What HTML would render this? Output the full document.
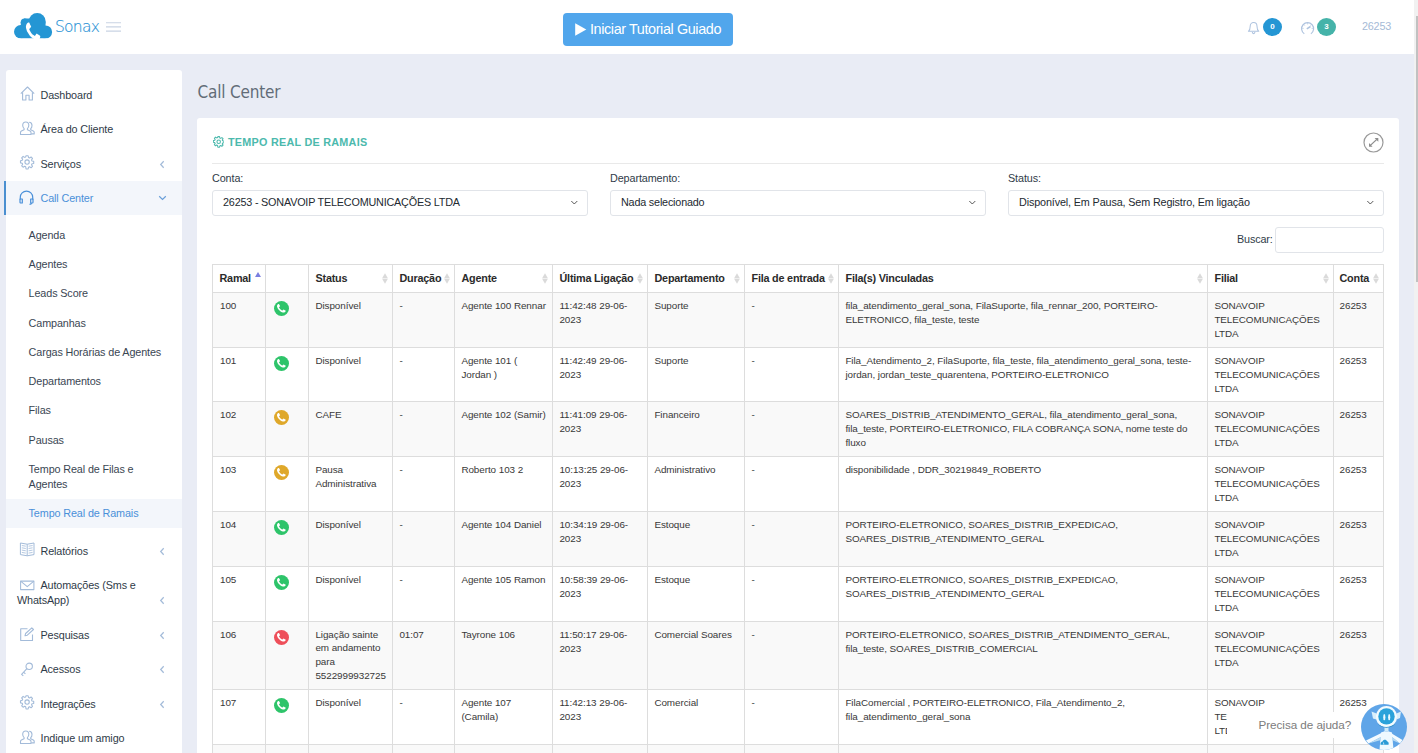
<!DOCTYPE html>
<html lang="pt-br">
<head>
<meta charset="utf-8">
<title>Sonax - Call Center</title>
<style>
*{box-sizing:border-box;margin:0;padding:0}
html,body{width:1418px;height:753px;overflow:hidden}
body{background:#e9ecf5;font-family:"Liberation Sans",Arial,sans-serif;font-size:12px;color:#4d5660;position:relative}
.abs{position:absolute}
/* header */
#hdr{position:absolute;left:0;top:0;width:1414px;height:54px;background:#fff}
#logo-txt{position:absolute;left:55px;top:14px;font-size:15.5px;color:#2b93d6;-webkit-text-stroke:.15px #2b93d6;letter-spacing:-.75px;line-height:26px;font-weight:200;font-family:"DejaVu Sans Light","DejaVu Sans","Liberation Sans",sans-serif}
#burger{position:absolute;left:106px;top:21.800px;width:15px;height:10px}
#burger i{display:block;height:1.400px;background:#ccd6e6;margin-bottom:2.850px}
#tut{position:absolute;left:563px;top:13px;width:170px;height:33px;background:#51a6ec;border-radius:4px;color:#fff;font-size:14.4px;line-height:32.300px;text-align:left;padding-left:27px;letter-spacing:-.39px;white-space:nowrap}
.badge{position:absolute;width:19px;height:18px;border-radius:50%;color:#fff;font-size:8px;font-weight:bold;text-align:center;line-height:18px}
#acct{position:absolute;left:1362px;top:19px;font-size:10.8px;color:#a5bad6;line-height:14px;letter-spacing:-.2px}
/* scrollbar */
#sbt{position:absolute;left:1414px;top:0;width:4px;height:753px;background:#f1f1f1}
#sbh{position:absolute;left:1416px;top:16px;width:2px;height:266px;background:#c1c1c1}
/* sidebar */
#side{position:absolute;left:6px;top:70px;width:176px;height:700px;background:#fff;border-radius:3px 3px 0 0}
.mi{position:absolute;left:34.500px;font-size:10.8px;color:#2f3b48;line-height:15px;white-space:nowrap;letter-spacing:-.12px}
.sm{position:absolute;left:22.600px;font-size:10.8px;color:#3a4653;line-height:15px;white-space:nowrap;letter-spacing:-.12px}
.ic{position:absolute;left:13px;width:16px;height:16px}
.ic svg{display:block;overflow:visible}
.arr{position:absolute;left:153px;width:6px;height:8px}
.arr svg{display:block}
#act{position:absolute;left:-2px;top:111px;width:178px;height:34px;background:#f3f6fb;border-left:2px solid #4a8fd0}
#act2{position:absolute;left:0;top:429px;width:176px;height:29px;background:#f3f6fb}
/* main */
#ttl{position:absolute;left:197.500px;top:79px;font-size:17px;line-height:26px;color:#626c78;font-family:"DejaVu Sans Condensed","Liberation Sans",sans-serif;font-weight:400;letter-spacing:-.18px}
#panel{position:absolute;left:197px;top:118px;width:1202px;height:700px;background:#fff;border-radius:3px 3px 0 0}
#ph{position:absolute;left:31px;top:18px;font-size:10.8px;font-weight:bold;color:#4cb9ad;letter-spacing:.26px;line-height:14px;white-space:nowrap}
#hr{position:absolute;left:15px;top:46px;width:1172px;height:1px;background:#e9e9e9}
.lbl{position:absolute;top:54px;letter-spacing:-.1px;font-size:10.8px;color:#2f3b48;line-height:14px}
.sel{position:absolute;top:73px;width:376px;height:26px;border:1px solid #e1e4e9;border-radius:3px;font-size:10.8px;color:#232a31;line-height:23px;padding-left:10px;white-space:nowrap;background:#fff;letter-spacing:-.19px}
.sel svg{position:absolute;right:9px;top:9px}
#srch{position:absolute;left:1078px;top:110px;width:109px;height:26px;border:1px solid #e1e4e9;border-radius:3px}
#bus{position:absolute;left:1040px;top:115px;font-size:10.8px;color:#2f3b48;line-height:14px;letter-spacing:-.15px}
/* table */
#tbl{position:absolute;left:15px;top:147px;width:1171px;border-collapse:collapse;table-layout:fixed;font-size:9.9px;color:#383838}
#tbl th,#tbl td{border:1px solid #ddd;vertical-align:top;text-align:left}
#tbl th{font-size:10.8px;font-weight:bold;color:#2b2b2b;height:28px;padding:6px 0 0 6.5px;line-height:14px;position:relative;white-space:nowrap;background:#fff;letter-spacing:-.2px}
#tbl td{padding:5.65px 4px 0 6.400px;line-height:14px;letter-spacing:-.07px}
#tbl td:last-child{padding-left:5.600px}
#tbl td:first-child{padding-left:7px}
#tbl th:last-child{padding-left:5.5px}
#tbl tr.o td{background:#f9f9f9}
#tbl tr.e td{background:#fff}
.so{position:absolute;right:4.300px;top:8px;width:6px;height:11px}
.ph{display:block;width:15px;height:15px;border-radius:50%;margin:2.2px 0 0 1.700px;position:relative}
.ph svg{position:absolute;left:3px;top:3.2px}
/* help */
#help{position:absolute;left:1226.500px;top:712px;width:150px;height:26px;background:#fff;border-radius:3px;font-size:11.7px;color:#7c7c7c;line-height:26px;padding-left:32px;white-space:nowrap;letter-spacing:-.05px}
#bot{position:absolute;left:1361px;top:704px;width:46px;height:46px;border-radius:50%;background:#5fa5e8;overflow:hidden}
</style>
</head>
<body>
<div id="hdr">
  <svg class="abs" style="left:14px;top:13px" width="39" height="27" viewBox="0 0 39 27"><g fill="#2496d4"><circle cx="6.800" cy="18.800" r="6.800"/><circle cx="10.600" cy="9.300" r="3.900"/><circle cx="23.200" cy="8.500" r="8.500"/><circle cx="31.500" cy="19" r="6.600"/><rect x="6.800" y="9" width="24.700" height="16.600"/><rect x="10" y="5.500" width="10" height="6"/></g><rect x="0" y="25.600" width="39" height="2" fill="#fff"/><g transform="translate(11.900 9.500) scale(.0102 .0124)"><path fill="#fff" d="M1408 1112q0 27-10 70.500t-21 68.500q-21 50-122 106-94 51-186 51-27 0-53-3.500t-57.500-12.500-47-14.500-55.500-20.500-49-18q-98-35-175-83-127-79-264-216t-216-264q-48-77-83-175-3-9-18-49t-20.500-55.500-14.500-47-12.500-57.500-3.500-53q0-92 51-186 56-101 106-122 25-11 68.500-21t70.500-10q14 0 21 3 18 6 53 76 11 19 30 54t35 63.500 31 53.500q3 4 17.500 25t21.500 35.500 7 28.500q0 20-28.500 50t-62 55-62 53-28.500 46q0 9 5 22.500t8.500 20.500 14 24 11.500 19q76 137 174 235t235 174q2 1 19 11.500t24 14 20.500 8.500 22.500 5q18 0 46-28.500t53-62 55-62 50-28.500q14 0 28.500 7t35.500 21.500 25 17.500q25 15 53.500 31t63.500 35 54 30q70 35 76 53 3 7 3 21z"/></g><rect x="0" y="25.600" width="39" height="2" fill="#fff"/></svg>
  <div id="logo-txt">Sonax</div>
  <svg class="abs" style="left:106px;top:21px" width="15" height="12" viewBox="0 0 15 12"><path d="M0 1.150h15v1.150H0zM0 5.350h15v1.150H0zM0 9.550h15v1.150H0z" fill="#c9d3e4"/></svg>
  <div id="tut"><svg class="abs" style="left:12.300px;top:9.500px" width="11.500" height="13" viewBox="0 0 11.500 13"><path d="M.2.300L11.300 6.500.2 12.700z" fill="#fff"/></svg>Iniciar Tutorial Guiado</div>
  <!-- bell -->
  <svg class="abs" style="left:1247px;top:21px" width="13" height="14" viewBox="0 0 13 14" fill="none" stroke="#aec3df" stroke-width="1.050" stroke-linejoin="round">
    <path d="M1.400 10.300C2.700 9.300 3.200 7.800 3.200 5.200 3.200 3 4.700 1.500 6.600 1.500S10 3 10 5.200c0 2.600.5 4.100 1.800 5.100z"/>
    <path d="M5.300 11c0 .9.600 1.600 1.300 1.600s1.300-.7 1.300-1.600"/>
  </svg>
  <div class="badge" style="left:1263px;top:18px;background:#2496d4">0</div>
  <!-- gauge -->
  <svg class="abs" style="left:1300px;top:21.400px" width="15" height="14" viewBox="0 0 15 14" fill="none" stroke="#aec3df" stroke-width="1.200">
    <path d="M4.300 12.700A6 6 0 1 1 10.900 12.700"/>
    <path d="M6.800 7.800l3.700-2.300" stroke-width="1.500"/>
    <path d="M7.600 2.200v1.200M3.900 3.700l.8.800M11.300 3.700l-.8.800M2.400 7.400h1.200M12.800 7.400h-1.200" stroke-width=".8"/>
  </svg>
  <div class="badge" style="left:1317px;top:18px;background:#45b3a9">3</div>
  <div id="acct">26253</div>
</div>
<div id="sbt"></div><div id="sbh"></div>

<div id="side">
  <div id="act"></div>
  <div id="act2"></div>
<div class="ic" style="top:16.5px"><svg width="15" height="15" style="margin:-.5px 0 0 .7px" viewBox="0 0 15 15" fill="none" stroke="#a3bbd9" stroke-width="1.1" stroke-linejoin="round"><path d="M.8 7.600L7.500 1l6.700 6.600"/><path d="M2.600 6.200V14h3.300V9.300h3.200V14h3.300V6.200"/></svg></div><div class="mi" style="top:17.5px">Dashboard</div>
<div class="ic" style="top:50.5px"><svg width="15" height="15" style="margin:.9px 0 0 .7px" viewBox="0 0 15 15" fill="none" stroke="#a3bbd9" stroke-width="1.100" stroke-linejoin="round"><path d="M5.800 1C3.900 1 2.700 2.400 2.700 4.300c0 1.500.6 2.700 1.400 3.400v1.100L1.400 10C.8 10.300.5 10.800.5 11.400V13.500h10.500v-2.100c0-.6-.3-1.100-.9-1.400L7.400 8.800V7.700c.8-.7 1.400-1.900 1.400-3.400C8.800 2.400 7.600 1 5.800 1z"/><path d="M9.200 1.300c1.700.1 2.800 1.400 2.800 3.200 0 1.400-.5 2.500-1.300 3.200v1l2.600 1.200c.6.300.9.800.9 1.400v1.600h-3"/></svg></div><div class="mi" style="top:51.5px">Área do Cliente</div>
<div class="ic" style="top:85.5px"><svg width="14.200" height="14.200" style="margin:-.5px 0 0 .8px" viewBox="0 0 15 15" fill="none" stroke="#a3bbd9" stroke-width="1.150" stroke-linejoin="round"><circle cx="7.500" cy="7.500" r="2.300"/><path d="M6.400.8h2.200l.4 1.800 1.100.5 1.600-1 1.500 1.500-1 1.600.5 1.100 1.800.4v2.200l-1.800.4-.5 1.100 1 1.600-1.500 1.500-1.600-1-1.100.5-.4 1.800H6.400L6 12.400l-1.100-.5-1.600 1-1.500-1.500 1-1.600-.5-1.100L.5 8.300V6.100l1.800-.4.500-1.100-1-1.600 1.500-1.500 1.600 1L6 2z"/></svg></div><div class="mi" style="top:86.5px">Serviços</div><div class="arr" style="top:89.5px"><svg width="6" height="9" viewBox="0 0 6 9" fill="none" stroke="#a3bbd9" stroke-width="1.250"><path d="M4.700 1.300L1.700 4.500 4.700 7.700"/></svg></div>
<div class="ic" style="top:119.5px"><svg width="15" height="15" viewBox="0 0 15 15" fill="none" stroke="#4a90d9" stroke-width="1.200" stroke-linejoin="round"><path d="M1.300 9.500V7.200C1.300 3.800 4.100 1.100 7.500 1.100s6.200 2.700 6.200 6.100v2.300"/><path d="M1 9h2.300v4H1.800c-.5 0-.8-.4-.8-.8z"/><path d="M14 9h-2.300v4h1.500c.5 0 .8-.4.800-.8z"/><path d="M12.500 13c0 .9-.8 1.400-2 1.400"/></svg></div><div class="mi" style="top:120.5px;color:#4a90d9">Call Center</div><div class="arr" style="top:125px;left:152px"><svg width="9" height="6" viewBox="0 0 9 6" fill="none" stroke="#6a9fd9" stroke-width="1.200"><path d="M1.200 1.300L4.500 4.500 7.800 1.300"/></svg></div>
<div class="sm" style="top:157.5px">Agenda</div>
<div class="sm" style="top:186.5px">Agentes</div>
<div class="sm" style="top:215.5px">Leads Score</div>
<div class="sm" style="top:245.5px">Campanhas</div>
<div class="sm" style="top:274.5px">Cargas Horárias de Agentes</div>
<div class="sm" style="top:303.5px">Departamentos</div>
<div class="sm" style="top:332.5px">Filas</div>
<div class="sm" style="top:362.5px">Pausas</div>
<div class="sm" style="top:391.5px">Tempo Real de Filas e<br>Agentes</div>
<div class="sm" style="top:435.5px;color:#4a90d9">Tempo Real de Ramais</div>
<div class="ic" style="top:472.5px"><svg width="16" height="15" style="margin-top:-.6px" viewBox="0 0 16 15" fill="none" stroke="#a3bbd9" stroke-width="1" stroke-linejoin="round"><path d="M1.400 1L8.200 2.200V13.800L1.400 12.600zM15 1L8.200 2.200M15 1V12.600L8.200 13.800"/><path stroke-width=".8" d="M2.800 3.500l4 .7M2.800 5.800l4 .7M2.800 8.100l4 .7M2.800 10.400l4 .7M13.600 3.500l-4 .7M13.600 5.800l-4 .7M13.600 8.100l-4 .7M13.600 10.400l-4 .7"/></svg></div><div class="mi" style="top:473.5px">Relatórios</div><div class="arr" style="top:476.5px"><svg width="6" height="9" viewBox="0 0 6 9" fill="none" stroke="#a3bbd9" stroke-width="1.250"><path d="M4.700 1.300L1.700 4.500 4.700 7.700"/></svg></div>
<div class="ic" style="top:506.5px"><svg width="16" height="15" viewBox="0 0 16 15" fill="none" stroke="#a3bbd9" stroke-width="1.050" stroke-linejoin="round"><rect x="1.600" y="4.100" width="13.300" height="8.500"/><path d="M1.600 4.100l6.650 5.600 6.650-5.600"/></svg></div><div class="mi" style="top:507.5px">Automações (Sms e</div><div class="mi" style="top:522.5px;left:11px">WhatsApp)</div><div class="arr" style="top:525.5px"><svg width="6" height="9" viewBox="0 0 6 9" fill="none" stroke="#a3bbd9" stroke-width="1.250"><path d="M4.700 1.300L1.700 4.500 4.700 7.700"/></svg></div>
<div class="ic" style="top:556.5px"><svg width="16" height="15" viewBox="0 0 16 15" fill="none" stroke="#a3bbd9" stroke-width="1.100" stroke-linejoin="round"><path d="M8.500 1.700H1.700V13.500h11.800V7.500"/><path d="M6 8.800l.6-2.300L12.800.8l1.700 1.700-6.200 5.700z"/></svg></div><div class="mi" style="top:557.5px">Pesquisas</div><div class="arr" style="top:560.5px"><svg width="6" height="9" viewBox="0 0 6 9" fill="none" stroke="#a3bbd9" stroke-width="1.250"><path d="M4.700 1.300L1.700 4.500 4.700 7.700"/></svg></div>
<div class="ic" style="top:590.5px"><svg width="15" height="16" viewBox="0 0 15 16" fill="none" stroke="#a3bbd9" stroke-width="1.100" stroke-linejoin="round"><circle cx="10.200" cy="5.300" r="3.200"/><path d="M7.900 7.600L2.600 13.300l1.700 1.600M4.600 11.200l1.800 1.700"/></svg></div><div class="mi" style="top:591.5px">Acessos</div><div class="arr" style="top:594.5px"><svg width="6" height="9" viewBox="0 0 6 9" fill="none" stroke="#a3bbd9" stroke-width="1.250"><path d="M4.700 1.300L1.700 4.500 4.700 7.700"/></svg></div>
<div class="ic" style="top:625.5px"><svg width="14.200" height="14.200" style="margin:-.5px 0 0 .8px" viewBox="0 0 15 15" fill="none" stroke="#a3bbd9" stroke-width="1.150" stroke-linejoin="round"><circle cx="7.500" cy="7.500" r="2.300"/><path d="M6.400.8h2.200l.4 1.800 1.100.5 1.600-1 1.500 1.500-1 1.600.5 1.100 1.800.4v2.200l-1.800.4-.5 1.100 1 1.600-1.500 1.500-1.600-1-1.100.5-.4 1.800H6.400L6 12.400l-1.100-.5-1.600 1-1.500-1.500 1-1.600-.5-1.100L.5 8.300V6.100l1.800-.4.500-1.100-1-1.600 1.500-1.500 1.600 1L6 2z"/></svg></div><div class="mi" style="top:626.5px">Integrações</div><div class="arr" style="top:629.5px"><svg width="6" height="9" viewBox="0 0 6 9" fill="none" stroke="#a3bbd9" stroke-width="1.250"><path d="M4.700 1.300L1.700 4.500 4.700 7.700"/></svg></div>
<div class="ic" style="top:659.5px"><svg width="15" height="15" style="margin:.9px 0 0 .7px" viewBox="0 0 15 15" fill="none" stroke="#a3bbd9" stroke-width="1.100" stroke-linejoin="round"><path d="M5.800 1C3.900 1 2.700 2.400 2.700 4.300c0 1.500.6 2.700 1.400 3.400v1.100L1.400 10C.8 10.300.5 10.800.5 11.400V13.500h10.500v-2.100c0-.6-.3-1.100-.9-1.400L7.400 8.800V7.700c.8-.7 1.400-1.900 1.400-3.400C8.800 2.400 7.600 1 5.800 1z"/><path d="M9.200 1.300c1.700.1 2.800 1.400 2.800 3.200 0 1.400-.5 2.500-1.300 3.200v1l2.600 1.200c.6.300.9.800.9 1.400v1.600h-3"/></svg></div><div class="mi" style="top:660.5px">Indique um amigo</div>
</div>

<div id="ttl">Call Center</div>
<div id="panel"><div style="position:absolute;left:0;top:-1px">
  <div id="ph">TEMPO REAL DE RAMAIS</div>
  <div id="hr"></div>
<svg class="abs" style="left:15.600px;top:19.300px" width="11.400" height="11.400" viewBox="0 0 15 15" fill="none" stroke="#4cb9ad" stroke-width="1.400" stroke-linejoin="round"><circle cx="7.500" cy="7.500" r="2.300"/><path d="M6.400.8h2.200l.4 1.800 1.100.5 1.600-1 1.500 1.500-1 1.600.5 1.100 1.800.4v2.200l-1.800.4-.5 1.100 1 1.600-1.500 1.500-1.600-1-1.100.5-.4 1.800H6.400L6 12.400l-1.100-.5-1.600 1-1.500-1.500 1-1.600-.5-1.100L.5 8.300V6.100l1.800-.4.500-1.100-1-1.600 1.500-1.500 1.600 1L6 2z"/></svg><svg class="abs" style="left:1166.100px;top:15px" width="21" height="21" viewBox="0 0 21 21" fill="none"><circle cx="10.500" cy="10.500" r="9.500" stroke="#9a9a9a" stroke-width="1.200"/><path d="M7.400 13.400L13.800 7.400" stroke="#8d8d8d" stroke-width="1.300"/><path d="M11.600 6h3.700v3.700z" fill="#8d8d8d"/><path d="M9.600 14.700H6v-3.600z" fill="#8d8d8d"/></svg><div class="lbl" style="left:15px">Conta:</div><div class="lbl" style="left:413px">Departamento:</div><div class="lbl" style="left:811px">Status:</div>
<div class="sel" style="left:15px">26253 - SONAVOIP TELECOMUNICAÇÕES LTDA<svg width="8" height="5" viewBox="0 0 8 5" fill="none" stroke="#3a3a3a" stroke-width=".85"><path d="M1.300 1L4.300 4 7.300 1"/></svg></div>
<div class="sel" style="left:413px">Nada selecionado<svg width="8" height="5" viewBox="0 0 8 5" fill="none" stroke="#3a3a3a" stroke-width=".85"><path d="M1.300 1L4.300 4 7.300 1"/></svg></div>
<div class="sel" style="left:811px;letter-spacing:-.135px">Disponível, Em Pausa, Sem Registro, Em ligação<svg width="8" height="5" viewBox="0 0 8 5" fill="none" stroke="#3a3a3a" stroke-width=".85"><path d="M1.300 1L4.300 4 7.300 1"/></svg></div>
<div id="bus">Buscar:</div><div id="srch"></div>
<table id="tbl"><colgroup><col style="width:53px"><col style="width:43px"><col style="width:84px"><col style="width:62px"><col style="width:98px"><col style="width:95px"><col style="width:97px"><col style="width:94px"><col style="width:369px"><col style="width:126px"><col style="width:50px"></colgroup>
<thead><tr><th>Ramal<svg class="so" style="top:7px;height:5px" viewBox="0 0 6 5"><path d="M3 0L6 5H0z" fill="#7b7fe0"/></svg></th><th></th><th>Status<svg class="so" viewBox="0 0 6 11"><path d="M3 .2L5.900 5.200H.1z" fill="#dadada"/><path d="M3 10.800L5.900 5.800H.1z" fill="#dadada"/></svg></th><th>Duração<svg class="so" viewBox="0 0 6 11"><path d="M3 .2L5.900 5.200H.1z" fill="#dadada"/><path d="M3 10.800L5.900 5.800H.1z" fill="#dadada"/></svg></th><th>Agente<svg class="so" viewBox="0 0 6 11"><path d="M3 .2L5.900 5.200H.1z" fill="#dadada"/><path d="M3 10.800L5.900 5.800H.1z" fill="#dadada"/></svg></th><th>Última Ligação<svg class="so" viewBox="0 0 6 11"><path d="M3 .2L5.900 5.200H.1z" fill="#dadada"/><path d="M3 10.800L5.900 5.800H.1z" fill="#dadada"/></svg></th><th>Departamento<svg class="so" viewBox="0 0 6 11"><path d="M3 .2L5.900 5.200H.1z" fill="#dadada"/><path d="M3 10.800L5.900 5.800H.1z" fill="#dadada"/></svg></th><th>Fila de entrada<svg class="so" viewBox="0 0 6 11"><path d="M3 .2L5.900 5.200H.1z" fill="#dadada"/><path d="M3 10.800L5.900 5.800H.1z" fill="#dadada"/></svg></th><th>Fila(s) Vinculadas<svg class="so" viewBox="0 0 6 11"><path d="M3 .2L5.900 5.200H.1z" fill="#dadada"/><path d="M3 10.800L5.900 5.800H.1z" fill="#dadada"/></svg></th><th>Filial<svg class="so" viewBox="0 0 6 11"><path d="M3 .2L5.900 5.200H.1z" fill="#dadada"/><path d="M3 10.800L5.900 5.800H.1z" fill="#dadada"/></svg></th><th>Conta<svg class="so" viewBox="0 0 6 11"><path d="M3 .2L5.900 5.200H.1z" fill="#dadada"/><path d="M3 10.800L5.900 5.800H.1z" fill="#dadada"/></svg></th></tr></thead>
<tbody>
<tr class="o" style="height:55px"><td>100</td><td><span class="ph" style="background:#2ec46a"><svg width="8.600" height="8.600" viewBox="0 0 1408 1408"><path fill="#fff" d="M1408 1112q0 27-10 70.500t-21 68.500q-21 50-122 106-94 51-186 51-27 0-53-3.500t-57.500-12.500-47-14.500-55.500-20.500-49-18q-98-35-175-83-127-79-264-216t-216-264q-48-77-83-175-3-9-18-49t-20.500-55.500-14.500-47-12.500-57.500-3.500-53q0-92 51-186 56-101 106-122 25-11 68.500-21t70.500-10q14 0 21 3 18 6 53 76 11 19 30 54t35 63.500 31 53.500q3 4 17.500 25t21.500 35.500 7 28.500q0 20-28.500 50t-62 55-62 53-28.500 46q0 9 5 22.500t8.500 20.500 14 24 11.500 19q76 137 174 235t235 174q2 1 19 11.500t24 14 20.500 8.500 22.500 5q18 0 46-28.500t53-62 55-62 50-28.500q14 0 28.500 7t35.500 21.500 25 17.500q25 15 53.500 31t63.500 35 54 30q70 35 76 53 3 7 3 21z"/></svg></span></td><td>Disponível</td><td>-</td><td>Agente 100 Rennar</td><td>11:42:48 29-06-2023</td><td>Suporte</td><td>-</td><td>fila_atendimento_geral_sona, FilaSuporte, fila_rennar_200, PORTEIRO-ELETRONICO, fila_teste, teste</td><td>SONAVOIP TELECOMUNICAÇÕES LTDA</td><td>26253</td></tr>
<tr class="e" style="height:54px"><td>101</td><td><span class="ph" style="background:#2ec46a"><svg width="8.600" height="8.600" viewBox="0 0 1408 1408"><path fill="#fff" d="M1408 1112q0 27-10 70.500t-21 68.500q-21 50-122 106-94 51-186 51-27 0-53-3.500t-57.500-12.500-47-14.500-55.500-20.500-49-18q-98-35-175-83-127-79-264-216t-216-264q-48-77-83-175-3-9-18-49t-20.500-55.500-14.500-47-12.500-57.500-3.500-53q0-92 51-186 56-101 106-122 25-11 68.500-21t70.500-10q14 0 21 3 18 6 53 76 11 19 30 54t35 63.500 31 53.500q3 4 17.500 25t21.500 35.500 7 28.500q0 20-28.500 50t-62 55-62 53-28.500 46q0 9 5 22.500t8.500 20.500 14 24 11.500 19q76 137 174 235t235 174q2 1 19 11.500t24 14 20.500 8.500 22.500 5q18 0 46-28.500t53-62 55-62 50-28.500q14 0 28.500 7t35.500 21.500 25 17.500q25 15 53.500 31t63.500 35 54 30q70 35 76 53 3 7 3 21z"/></svg></span></td><td>Disponível</td><td>-</td><td>Agente 101 ( Jordan )</td><td>11:42:49 29-06-2023</td><td>Suporte</td><td>-</td><td>Fila_Atendimento_2, FilaSuporte, fila_teste, fila_atendimento_geral_sona, teste-jordan, jordan_teste_quarentena, PORTEIRO-ELETRONICO</td><td>SONAVOIP TELECOMUNICAÇÕES LTDA</td><td>26253</td></tr>
<tr class="o" style="height:55px"><td>102</td><td><span class="ph" style="background:#dfa82a"><svg width="8.600" height="8.600" viewBox="0 0 1408 1408"><path fill="#fff" d="M1408 1112q0 27-10 70.500t-21 68.500q-21 50-122 106-94 51-186 51-27 0-53-3.500t-57.500-12.500-47-14.500-55.500-20.500-49-18q-98-35-175-83-127-79-264-216t-216-264q-48-77-83-175-3-9-18-49t-20.500-55.500-14.500-47-12.500-57.500-3.500-53q0-92 51-186 56-101 106-122 25-11 68.500-21t70.500-10q14 0 21 3 18 6 53 76 11 19 30 54t35 63.500 31 53.500q3 4 17.500 25t21.500 35.500 7 28.500q0 20-28.500 50t-62 55-62 53-28.500 46q0 9 5 22.500t8.500 20.500 14 24 11.500 19q76 137 174 235t235 174q2 1 19 11.500t24 14 20.500 8.500 22.500 5q18 0 46-28.500t53-62 55-62 50-28.500q14 0 28.500 7t35.500 21.500 25 17.500q25 15 53.500 31t63.500 35 54 30q70 35 76 53 3 7 3 21z"/></svg></span></td><td>CAFE</td><td>-</td><td>Agente 102 (Samir)</td><td>11:41:09 29-06-2023</td><td>Financeiro</td><td>-</td><td>SOARES_DISTRIB_ATENDIMENTO_GERAL, fila_atendimento_geral_sona, fila_teste, PORTEIRO-ELETRONICO, FILA COBRANÇA SONA, nome teste do fluxo</td><td>SONAVOIP TELECOMUNICAÇÕES LTDA</td><td>26253</td></tr>
<tr class="e" style="height:55px"><td>103</td><td><span class="ph" style="background:#dfa82a"><svg width="8.600" height="8.600" viewBox="0 0 1408 1408"><path fill="#fff" d="M1408 1112q0 27-10 70.500t-21 68.500q-21 50-122 106-94 51-186 51-27 0-53-3.500t-57.500-12.500-47-14.500-55.500-20.500-49-18q-98-35-175-83-127-79-264-216t-216-264q-48-77-83-175-3-9-18-49t-20.500-55.500-14.500-47-12.500-57.500-3.500-53q0-92 51-186 56-101 106-122 25-11 68.500-21t70.500-10q14 0 21 3 18 6 53 76 11 19 30 54t35 63.500 31 53.500q3 4 17.500 25t21.500 35.500 7 28.500q0 20-28.500 50t-62 55-62 53-28.500 46q0 9 5 22.500t8.500 20.500 14 24 11.500 19q76 137 174 235t235 174q2 1 19 11.500t24 14 20.500 8.500 22.500 5q18 0 46-28.500t53-62 55-62 50-28.500q14 0 28.500 7t35.500 21.500 25 17.500q25 15 53.500 31t63.500 35 54 30q70 35 76 53 3 7 3 21z"/></svg></span></td><td>Pausa Administrativa</td><td>-</td><td>Roberto 103 2</td><td>10:13:25 29-06-2023</td><td>Administrativo</td><td>-</td><td>disponibilidade , DDR_30219849_ROBERTO</td><td>SONAVOIP TELECOMUNICAÇÕES LTDA</td><td>26253</td></tr>
<tr class="o" style="height:55px"><td>104</td><td><span class="ph" style="background:#2ec46a"><svg width="8.600" height="8.600" viewBox="0 0 1408 1408"><path fill="#fff" d="M1408 1112q0 27-10 70.500t-21 68.500q-21 50-122 106-94 51-186 51-27 0-53-3.500t-57.500-12.500-47-14.500-55.500-20.500-49-18q-98-35-175-83-127-79-264-216t-216-264q-48-77-83-175-3-9-18-49t-20.500-55.500-14.500-47-12.500-57.500-3.500-53q0-92 51-186 56-101 106-122 25-11 68.500-21t70.500-10q14 0 21 3 18 6 53 76 11 19 30 54t35 63.500 31 53.500q3 4 17.500 25t21.500 35.500 7 28.500q0 20-28.500 50t-62 55-62 53-28.500 46q0 9 5 22.500t8.500 20.500 14 24 11.500 19q76 137 174 235t235 174q2 1 19 11.500t24 14 20.500 8.500 22.500 5q18 0 46-28.500t53-62 55-62 50-28.500q14 0 28.500 7t35.500 21.500 25 17.500q25 15 53.500 31t63.500 35 54 30q70 35 76 53 3 7 3 21z"/></svg></span></td><td>Disponível</td><td>-</td><td>Agente 104 Daniel</td><td>10:34:19 29-06-2023</td><td>Estoque</td><td>-</td><td>PORTEIRO-ELETRONICO, SOARES_DISTRIB_EXPEDICAO, SOARES_DISTRIB_ATENDIMENTO_GERAL</td><td>SONAVOIP TELECOMUNICAÇÕES LTDA</td><td>26253</td></tr>
<tr class="e" style="height:55px"><td>105</td><td><span class="ph" style="background:#2ec46a"><svg width="8.600" height="8.600" viewBox="0 0 1408 1408"><path fill="#fff" d="M1408 1112q0 27-10 70.500t-21 68.500q-21 50-122 106-94 51-186 51-27 0-53-3.500t-57.500-12.500-47-14.500-55.500-20.500-49-18q-98-35-175-83-127-79-264-216t-216-264q-48-77-83-175-3-9-18-49t-20.500-55.500-14.500-47-12.500-57.500-3.500-53q0-92 51-186 56-101 106-122 25-11 68.500-21t70.500-10q14 0 21 3 18 6 53 76 11 19 30 54t35 63.500 31 53.500q3 4 17.500 25t21.500 35.500 7 28.500q0 20-28.500 50t-62 55-62 53-28.500 46q0 9 5 22.500t8.500 20.500 14 24 11.500 19q76 137 174 235t235 174q2 1 19 11.500t24 14 20.500 8.500 22.500 5q18 0 46-28.500t53-62 55-62 50-28.500q14 0 28.500 7t35.500 21.500 25 17.500q25 15 53.500 31t63.500 35 54 30q70 35 76 53 3 7 3 21z"/></svg></span></td><td>Disponível</td><td>-</td><td>Agente 105 Ramon</td><td>10:58:39 29-06-2023</td><td>Estoque</td><td>-</td><td>PORTEIRO-ELETRONICO, SOARES_DISTRIB_EXPEDICAO, SOARES_DISTRIB_ATENDIMENTO_GERAL</td><td>SONAVOIP TELECOMUNICAÇÕES LTDA</td><td>26253</td></tr>
<tr class="o" style="height:68px"><td>106</td><td><span class="ph" style="background:#ee4f5a"><svg width="8.600" height="8.600" viewBox="0 0 1408 1408"><path fill="#fff" d="M1408 1112q0 27-10 70.500t-21 68.500q-21 50-122 106-94 51-186 51-27 0-53-3.500t-57.500-12.500-47-14.500-55.500-20.500-49-18q-98-35-175-83-127-79-264-216t-216-264q-48-77-83-175-3-9-18-49t-20.500-55.500-14.500-47-12.500-57.500-3.500-53q0-92 51-186 56-101 106-122 25-11 68.500-21t70.500-10q14 0 21 3 18 6 53 76 11 19 30 54t35 63.500 31 53.500q3 4 17.500 25t21.500 35.500 7 28.500q0 20-28.500 50t-62 55-62 53-28.500 46q0 9 5 22.500t8.500 20.500 14 24 11.500 19q76 137 174 235t235 174q2 1 19 11.500t24 14 20.500 8.500 22.500 5q18 0 46-28.500t53-62 55-62 50-28.500q14 0 28.500 7t35.500 21.500 25 17.500q25 15 53.500 31t63.500 35 54 30q70 35 76 53 3 7 3 21z"/></svg></span></td><td style="line-height:13.600px;padding-top:5.850px">Ligação sainte em andamento para 5522999932725</td><td>01:07</td><td>Tayrone 106</td><td>11:50:17 29-06-2023</td><td>Comercial Soares</td><td>-</td><td>PORTEIRO-ELETRONICO, SOARES_DISTRIB_ATENDIMENTO_GERAL, fila_teste, SOARES_DISTRIB_COMERCIAL</td><td>SONAVOIP TELECOMUNICAÇÕES LTDA</td><td>26253</td></tr>
<tr class="e" style="height:55px"><td>107</td><td><span class="ph" style="background:#2ec46a"><svg width="8.600" height="8.600" viewBox="0 0 1408 1408"><path fill="#fff" d="M1408 1112q0 27-10 70.500t-21 68.500q-21 50-122 106-94 51-186 51-27 0-53-3.500t-57.500-12.500-47-14.500-55.500-20.500-49-18q-98-35-175-83-127-79-264-216t-216-264q-48-77-83-175-3-9-18-49t-20.500-55.500-14.500-47-12.500-57.500-3.500-53q0-92 51-186 56-101 106-122 25-11 68.500-21t70.500-10q14 0 21 3 18 6 53 76 11 19 30 54t35 63.500 31 53.500q3 4 17.500 25t21.500 35.500 7 28.500q0 20-28.500 50t-62 55-62 53-28.500 46q0 9 5 22.500t8.500 20.500 14 24 11.500 19q76 137 174 235t235 174q2 1 19 11.500t24 14 20.500 8.500 22.500 5q18 0 46-28.500t53-62 55-62 50-28.500q14 0 28.500 7t35.500 21.500 25 17.500q25 15 53.500 31t63.500 35 54 30q70 35 76 53 3 7 3 21z"/></svg></span></td><td>Disponível</td><td>-</td><td>Agente 107 (Camila)</td><td>11:42:13 29-06-2023</td><td>Comercial</td><td>-</td><td>FilaComercial , PORTEIRO-ELETRONICO, Fila_Atendimento_2, fila_atendimento_geral_sona</td><td>SONAVOIP TELECOMUNICAÇÕES LTDA</td><td>26253</td></tr>
<tr class="o" style="height:55px"><td>108</td><td><span class="ph" style="background:#2ec46a"><svg width="8.600" height="8.600" viewBox="0 0 1408 1408"><path fill="#fff" d="M1408 1112q0 27-10 70.500t-21 68.500q-21 50-122 106-94 51-186 51-27 0-53-3.500t-57.500-12.500-47-14.500-55.500-20.500-49-18q-98-35-175-83-127-79-264-216t-216-264q-48-77-83-175-3-9-18-49t-20.500-55.500-14.500-47-12.500-57.500-3.500-53q0-92 51-186 56-101 106-122 25-11 68.500-21t70.500-10q14 0 21 3 18 6 53 76 11 19 30 54t35 63.500 31 53.500q3 4 17.500 25t21.500 35.500 7 28.500q0 20-28.500 50t-62 55-62 53-28.500 46q0 9 5 22.500t8.500 20.500 14 24 11.500 19q76 137 174 235t235 174q2 1 19 11.500t24 14 20.500 8.500 22.500 5q18 0 46-28.500t53-62 55-62 50-28.500q14 0 28.500 7t35.500 21.500 25 17.500q25 15 53.500 31t63.500 35 54 30q70 35 76 53 3 7 3 21z"/></svg></span></td><td>Disponível</td><td>-</td><td>Agente 108</td><td>11:40:02 29-06-2023</td><td>Comercial</td><td>-</td><td>PORTEIRO-ELETRONICO, fila_teste</td><td>SONAVOIP TELECOMUNICAÇÕES LTDA</td><td>26253</td></tr>
</tbody></table>
</div></div>
<div id="help">Precisa de ajuda?</div>
<div id="bot"><svg width="46" height="46" viewBox="0 0 46 46">
<path d="M24.500 27L5 36.500l2.500 3L20 33z" fill="#f4fbff"/>
<path d="M26.500 27L41.500 36l-2.500 3.500L31 33z" fill="#f4fbff"/>
<path d="M20 28.500c1.500-1.500 9.500-1.500 11 0l1.500 17.500h-14z" fill="#eef9ff"/>
<path d="M7.500 39.500L20 33v3z" fill="#b9dcf3"/><path d="M39 39.500L31 33v3z" fill="#b9dcf3"/>
<rect x="23.500" y="23.500" width="4" height="4" fill="#cfeaf9"/>
<path d="M10.500 7.500l5 2v6l-3.500-1z" fill="#d9effb"/><path d="M40 7.500l-4.500 2v6l3.500-1.500z" fill="#d9effb"/>
<ellipse cx="25.500" cy="12.700" rx="10.600" ry="10.700" fill="#f2fbff"/>
<path d="M17 19.500c3 4.500 13 4.500 17 0-2 5.500-15 5.500-17 0z" fill="#2a8cc4"/>
<circle cx="25.500" cy="12.400" r="8.200" fill="#2aa2da"/>
<ellipse cx="23.300" cy="13.200" rx="1.100" ry="3.100" fill="#e9f8ff"/><ellipse cx="28.200" cy="13.200" rx="1.100" ry="3.100" fill="#e9f8ff"/>
<path d="M19.500 40.800c-.3-2 .8-3.200 2-3.300.5-2 3.500-2.300 4.500-.3 1.500.2 2 2 1.500 3.600z" fill="#2a9bd6"/>
<path d="M22.500 38.500l.3 2" stroke="#fff" stroke-width=".7"/>
</svg></div>
</body>
</html>
